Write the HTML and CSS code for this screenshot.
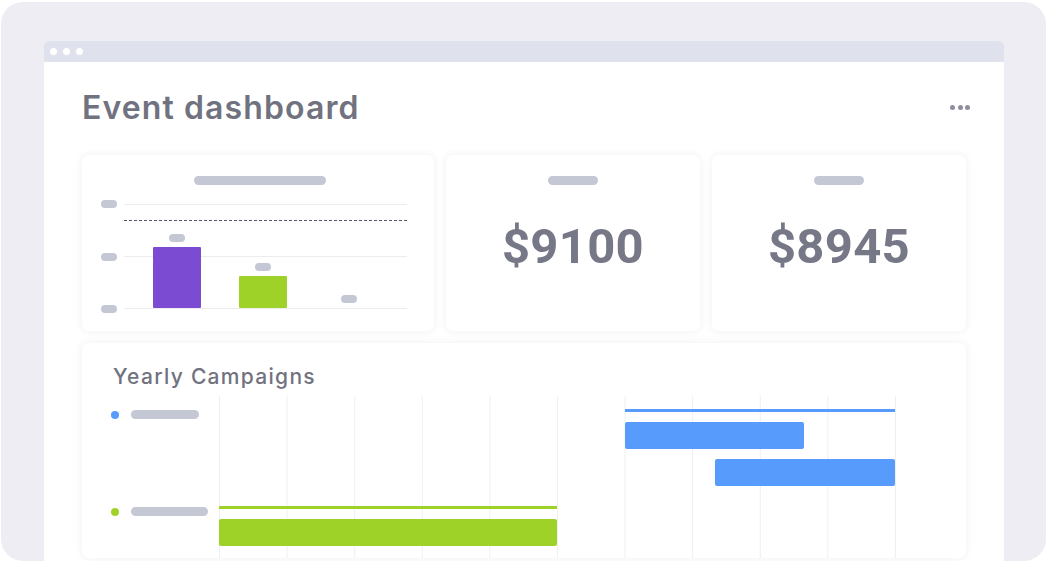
FILE: index.html
```html
<!DOCTYPE html>
<html lang="en">
<head>
<meta charset="utf-8">
<title>Event dashboard</title>
<link rel="stylesheet" href="styles.css">
</head>
<body>
<div class="frame">
  <div class="window">
    <div class="titlebar">
      <span class="tdot"></span><span class="tdot"></span><span class="tdot"></span>
    </div>
    <div class="content">
      <div class="header">
        <h1 class="page-title">Event dashboard</h1>
        <div class="menu"><span></span><span></span><span></span></div>
      </div>
      <div class="cards">
        <div class="card chart-card">
          <div class="pill pill-title"></div>
          <div class="chart">
            <div class="axis">
              <span class="pill pill-axis"></span>
              <span class="pill pill-axis"></span>
              <span class="pill pill-axis"></span>
            </div>
            <div class="plot">
              <div class="grid-row"></div>
              <div class="grid-row"></div>
              <div class="target"></div>
              <div class="bars">
                <div class="bar-col"><span class="pill pill-val"></span><div class="bar bar-purple" style="height:61px"></div></div>
                <div class="bar-col"><span class="pill pill-val"></span><div class="bar bar-green" style="height:32px"></div></div>
                <div class="bar-col"><span class="pill pill-val"></span><div class="bar" style="height:0px"></div></div>
              </div>
            </div>
          </div>
        </div>
        <div class="card stat-card">
          <div class="pill pill-stat"></div>
          <div class="stat-value">$9100</div>
        </div>
        <div class="card stat-card">
          <div class="pill pill-stat"></div>
          <div class="stat-value">$8945</div>
        </div>
      </div>
      <div class="card campaigns">
        <h2 class="section-title">Yearly Campaigns</h2>
        <div class="gantt">
          <div class="legend">
            <div class="legend-item"><span class="ldot ldot-blue"></span><span class="pill pill-legend" style="width:68px"></span></div>
            <div class="legend-item"><span class="ldot ldot-green"></span><span class="pill pill-legend" style="width:77px"></span></div>
          </div>
          <div class="timeline">
            <div class="track track-line blue" style="margin-left:60%;width:40%"></div>
            <div class="track track-bar blue" style="margin-left:60%;width:26.5%"></div>
            <div class="track track-bar blue" style="margin-left:73.4%;width:26.6%"></div>
            <div class="track track-line green gap-row" style="margin-left:0;width:50%"></div>
            <div class="track track-bar green" style="margin-left:0;width:50%"></div>
          </div>
        </div>
      </div>
    </div>
  </div>
</div>
</body>
</html>
```

FILE: styles.css
```css
* { box-sizing: border-box; }
html, body { margin: 0; padding: 0; }
body {
  background: #ffffff;
  width: 1048px;
  height: 561px;
  overflow: hidden;
  font-family: "Inter", "Open Sans", sans-serif;
}
.frame {
  margin: 2px 2px 0 1px;
  height: 559px;
  background: #ededf3;
  border-radius: 22px;
  padding: 39px 42px 0 43px;
  display: flex;
  flex-direction: column;
}
.window {
  flex: 1;
  background: #ffffff;
  border-radius: 5px 5px 0 0;
  display: flex;
  flex-direction: column;
  overflow: hidden;
}
.titlebar {
  height: 21px;
  background: #dfe1ec;
  display: flex;
  align-items: center;
  gap: 6px;
  padding-left: 6px;
}
.tdot {
  width: 7px;
  height: 7px;
  border-radius: 50%;
  background: #ffffff;
}
.content {
  flex: 1;
  display: flex;
  flex-direction: column;
  padding: 26px 38px 3px 38px;
}
.header {
  display: flex;
  justify-content: space-between;
  align-items: center;
  height: 40px;
}
.page-title {
  margin: 0;
  font-size: 32px;
  line-height: 40px;
  font-weight: 600;
  color: #71727f;
  letter-spacing: 1.1px;
}
.menu {
  display: flex;
  gap: 2.5px;
  margin-right: -4px;
  margin-top: -2px;
}
.menu span {
  width: 5px;
  height: 5px;
  border-radius: 50%;
  background: #8e8f9c;
}
.cards {
  display: flex;
  gap: 12px;
  margin-top: 27px;
  height: 176px;
}
.card {
  background: #ffffff;
  border-radius: 7px;
  box-shadow: 0 0 8px rgba(40, 40, 80, 0.07);
}
.pill {
  display: block;
  background: #c4c7d4;
  border-radius: 5px;
}
.chart-card {
  width: 352px;
  padding: 21px 27px 0 19px;
  display: flex;
  flex-direction: column;
}
.pill-title {
  width: 132px;
  height: 9px;
  align-self: center;
  margin-left: 12px;
}
.chart {
  display: flex;
  gap: 7px;
  margin-top: 15px;
  height: 113px;
}
.axis {
  width: 16px;
  display: flex;
  flex-direction: column;
  justify-content: space-between;
}
.pill-axis {
  width: 16px;
  height: 8px;
}
.plot {
  flex: 1;
  position: relative;
  margin: 4px 0;
  border-bottom: 1px solid #ececf0;
  display: flex;
  flex-direction: column;
}
.grid-row {
  height: 52px;
  border-top: 1px solid #ececf0;
}
.target {
  position: absolute;
  left: 0;
  right: 0;
  top: 16px;
  border-top: 1.5px dashed #55566a;
}
.bars {
  position: absolute;
  left: 29px;
  right: 0;
  bottom: 0;
  display: flex;
  gap: 38px;
  align-items: flex-end;
}
.bar-col {
  width: 48px;
  display: flex;
  flex-direction: column;
  align-items: center;
  gap: 5px;
}
.pill-val {
  width: 16px;
  height: 8px;
}
.bar {
  width: 48px;
  border-radius: 1px;
}
.bar-purple { background: #7b4cd2; }
.bar-green { background: #9ed228; }
.stat-card {
  width: 254px;
  padding-top: 21px;
  display: flex;
  flex-direction: column;
  align-items: center;
}
.pill-stat {
  width: 50px;
  height: 9px;
}
.stat-value {
  margin-top: 38px;
  font-family: "Roboto", "Liberation Sans", sans-serif;
  font-weight: 700;
  font-size: 49px;
  line-height: 48px;
  color: #767787;
  letter-spacing: 0.3px;
}
.campaigns {
  flex: 1;
  margin-top: 12px;
  padding: 22px 0 0 29px;
  display: flex;
  flex-direction: column;
  border-radius: 7px;
}
.section-title {
  margin: 0 0 0 2px;
  font-size: 21px;
  line-height: 24px;
  font-weight: 500;
  color: #717280;
  letter-spacing: 1.3px;
}
.gantt {
  flex: 1;
  display: flex;
  margin-top: 7px;
}
.legend {
  width: 108px;
  display: flex;
  flex-direction: column;
  gap: 88px;
  padding-top: 14px;
}
.legend-item {
  display: flex;
  align-items: center;
  gap: 12px;
  height: 9px;
}
.ldot {
  width: 8px;
  height: 8px;
  border-radius: 50%;
}
.ldot-blue { background: #579bfc; }
.ldot-green { background: #9ed228; }
.pill-legend { height: 9px; }
.timeline {
  width: 677px;
  background-image: linear-gradient(to right, #efeff2 1px, transparent 1px);
  background-size: 67.6px 100%;
  border-right: 1px solid #efeff2;
  display: flex;
  flex-direction: column;
  gap: 10px;
  padding-top: 13px;
}
.track { flex: none; }
.track-line { height: 3px; }
.track-bar { height: 27px; border-radius: 2px; }
.track.blue { background: #579bfc; }
.track.green { background: #9ed228; }
.gap-row { margin-top: 10px; }
```
